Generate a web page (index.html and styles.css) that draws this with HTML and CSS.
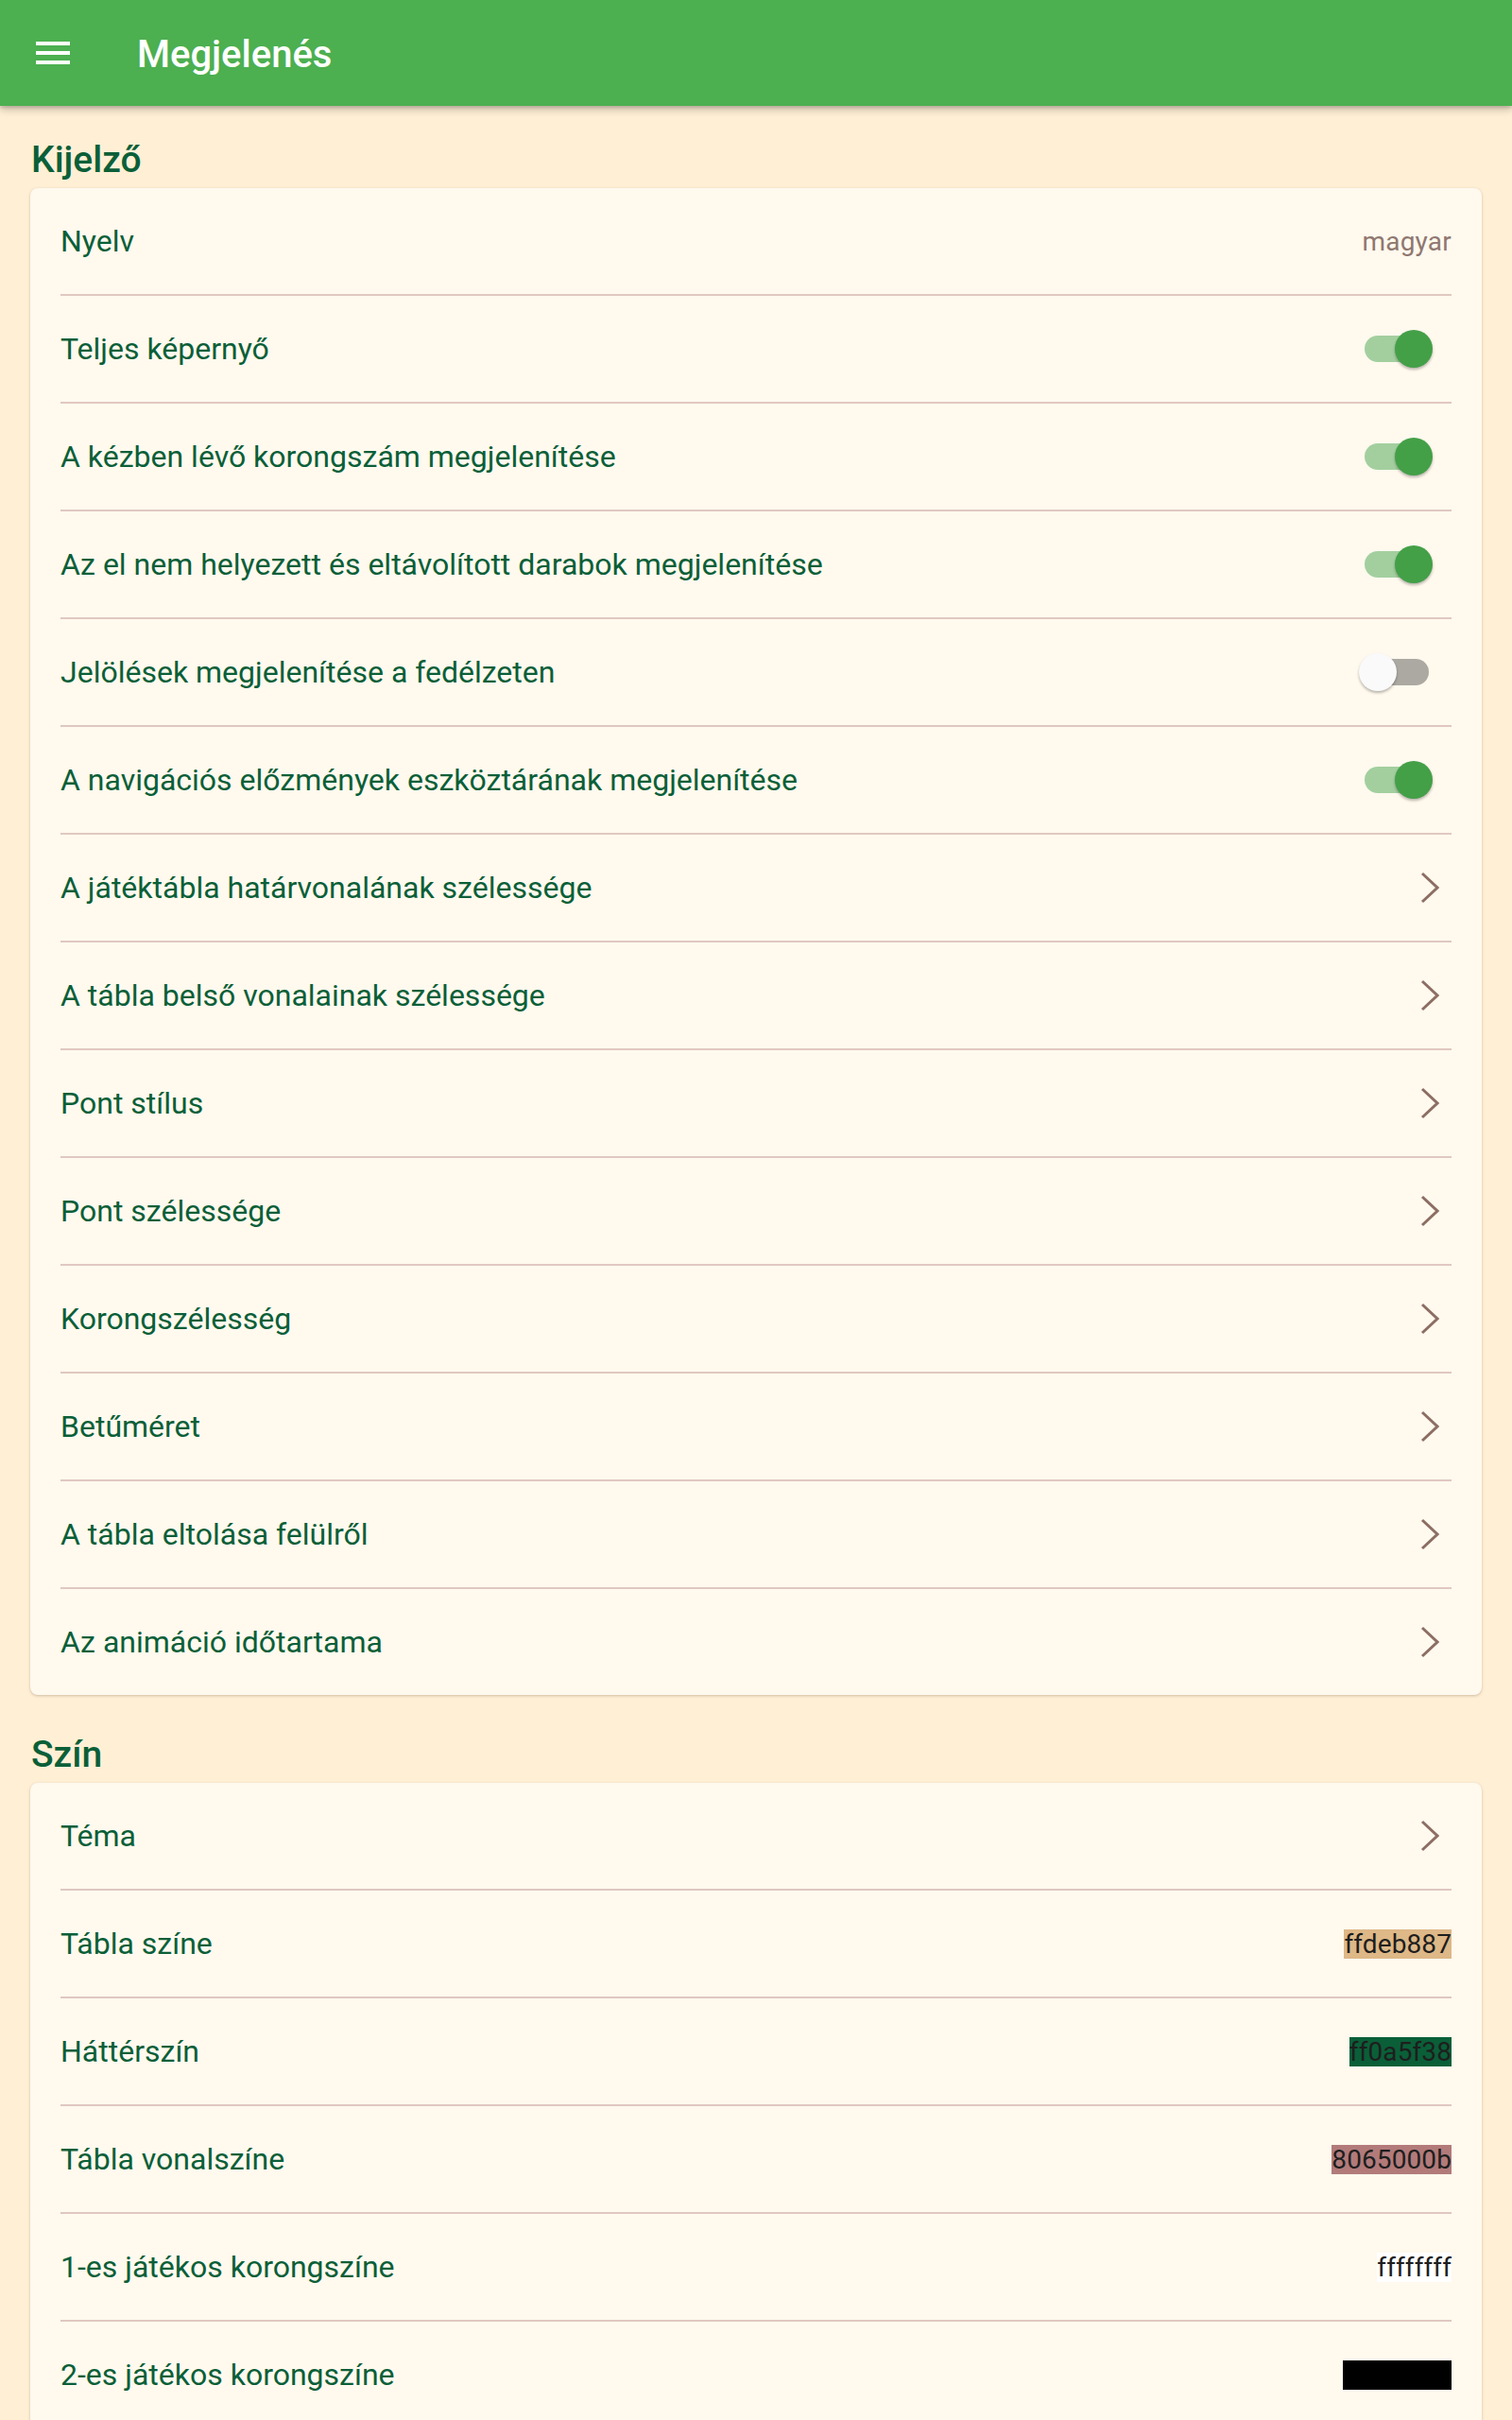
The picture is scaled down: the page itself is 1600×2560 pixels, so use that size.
FILE: index.html
```html
<!DOCTYPE html>
<html lang="hu">
<head>
<meta charset="utf-8">
<title>Megjelenés</title>
<link rel="stylesheet" href="styles.css">
</head>
<body>
<header class="appbar">
  <div class="menu-btn">
    <svg width="48" height="48" viewBox="0 0 24 24"><path d="M3 18h18v-2H3v2zm0-5h18v-2H3v2zm0-7v2h18V6H3z" fill="#fff"/></svg>
  </div>
  <div class="appbar-title">Megjelenés</div>
</header>
<main class="content">
  <h2 class="section-title">Kijelző</h2>
  <section class="card">
    <div class="row"><span class="label">Nyelv</span><span class="value-muted">magyar</span></div>
    <div class="row"><span class="label">Teljes képernyő</span><span class="switch on"><span class="track"></span><span class="thumb"></span></span></div>
    <div class="row"><span class="label">A kézben lévő korongszám megjelenítése</span><span class="switch on"><span class="track"></span><span class="thumb"></span></span></div>
    <div class="row"><span class="label">Az el nem helyezett és eltávolított darabok megjelenítése</span><span class="switch on"><span class="track"></span><span class="thumb"></span></span></div>
    <div class="row"><span class="label">Jelölések megjelenítése a fedélzeten</span><span class="switch off"><span class="track"></span><span class="thumb"></span></span></div>
    <div class="row"><span class="label">A navigációs előzmények eszköztárának megjelenítése</span><span class="switch on"><span class="track"></span><span class="thumb"></span></span></div>
    <div class="row"><span class="label">A játéktábla határvonalának szélessége</span><svg class="chev" width="20" height="34" viewBox="0 0 20 34"><polyline points="2,2 18,17 2,32"/></svg></div>
    <div class="row"><span class="label">A tábla belső vonalainak szélessége</span><svg class="chev" width="20" height="34" viewBox="0 0 20 34"><polyline points="2,2 18,17 2,32"/></svg></div>
    <div class="row"><span class="label">Pont stílus</span><svg class="chev" width="20" height="34" viewBox="0 0 20 34"><polyline points="2,2 18,17 2,32"/></svg></div>
    <div class="row"><span class="label">Pont szélessége</span><svg class="chev" width="20" height="34" viewBox="0 0 20 34"><polyline points="2,2 18,17 2,32"/></svg></div>
    <div class="row"><span class="label">Korongszélesség</span><svg class="chev" width="20" height="34" viewBox="0 0 20 34"><polyline points="2,2 18,17 2,32"/></svg></div>
    <div class="row"><span class="label">Betűméret</span><svg class="chev" width="20" height="34" viewBox="0 0 20 34"><polyline points="2,2 18,17 2,32"/></svg></div>
    <div class="row"><span class="label">A tábla eltolása felülről</span><svg class="chev" width="20" height="34" viewBox="0 0 20 34"><polyline points="2,2 18,17 2,32"/></svg></div>
    <div class="row"><span class="label">Az animáció időtartama</span><svg class="chev" width="20" height="34" viewBox="0 0 20 34"><polyline points="2,2 18,17 2,32"/></svg></div>
  </section>
  <h2 class="section-title">Szín</h2>
  <section class="card">
    <div class="row"><span class="label">Téma</span><svg class="chev" width="20" height="34" viewBox="0 0 20 34"><polyline points="2,2 18,17 2,32"/></svg></div>
    <div class="row"><span class="label">Tábla színe</span><span class="color-value c-board">ffdeb887</span></div>
    <div class="row"><span class="label">Háttérszín</span><span class="color-value c-bg">ff0a5f38</span></div>
    <div class="row"><span class="label">Tábla vonalszíne</span><span class="color-value c-line">8065000b</span></div>
    <div class="row"><span class="label">1-es játékos korongszíne</span><span class="color-value c-white">ffffffff</span></div>
    <div class="row"><span class="label">2-es játékos korongszíne</span><span class="color-value c-black">ff000000</span></div>
  </section>
</main>
</body>
</html>
```
FILE: styles.css
```css
* { box-sizing: border-box; }
html, body { margin: 0; padding: 0; }
body {
  background: #ffefd5;
  font-family: Roboto, "Noto Sans", "Liberation Sans", sans-serif;
  width: 1600px;
  min-height: 2560px;
  overflow: hidden;
}
.appbar {
  height: 112px;
  background: #4caf50;
  display: flex;
  align-items: center;
  box-shadow: 0 4px 8px rgba(0,0,0,0.22), 0 2px 3px rgba(0,0,0,0.12);
  position: relative;
  z-index: 2;
}
.menu-btn {
  width: 48px;
  height: 48px;
  margin-left: 32px;
}
.menu-btn svg { display: block; }
.appbar-title {
  margin-left: 65px;
  padding-top: 2px;
  color: #fff;
  font-size: 40px;
  font-weight: 500;
}
.content { padding: 0 32px; }
.section-title {
  margin: 0;
  padding: 35px 0 7px 1px;
  font-size: 39px;
  line-height: 45px;
  font-weight: 500;
  color: #0a5f38;
}
.card {
  background: #fff9ee;
  border-radius: 8px;
  box-shadow: 0 1px 3px rgba(120,90,60,0.35);
  margin-bottom: 6px;
}
.row {
  margin: 0 32px;
  height: 112px;
  display: flex;
  align-items: center;
  justify-content: space-between;
  box-sizing: content-box;
}
.row + .row { border-top: 2px solid #e0c8c0; }
.label {
  font-size: 32px;
  color: #0a5f38;
}
.value-muted {
  font-size: 28px;
  color: #8f7770;
  letter-spacing: 0.2px;
}
.switch {
  position: relative;
  width: 72px;
  height: 40px;
  margin-right: 20px;
}
.switch .track {
  position: absolute;
  left: 0;
  top: 6px;
  width: 68px;
  height: 28px;
  border-radius: 14px;
}
.switch .thumb {
  position: absolute;
  top: 0;
  width: 40px;
  height: 40px;
  border-radius: 50%;
  box-shadow: 0 2px 3px rgba(0,0,0,0.28);
}
.switch.on .track { background: #a3cf9f; }
.switch.on .thumb { background: #43a047; right: 0; }
.switch.off .track { background: #aca9a2; }
.switch.off .thumb { background: #fafafa; left: -6px; }
.chev {
  margin-right: 13px;
  fill: none;
  stroke: #8d6e63;
  stroke-width: 3;
}
.color-value {
  font-size: 28px;
  line-height: 31px;
  color: #1e1e1e;
  letter-spacing: 0.1px;
}
.c-board { background: #deb887; }
.c-bg { background: #0a5f38; }
.c-line { background: #b27b7a; }
.c-white { background: #ffffff; }
.c-black { background: #000000; color: #000; }
```
